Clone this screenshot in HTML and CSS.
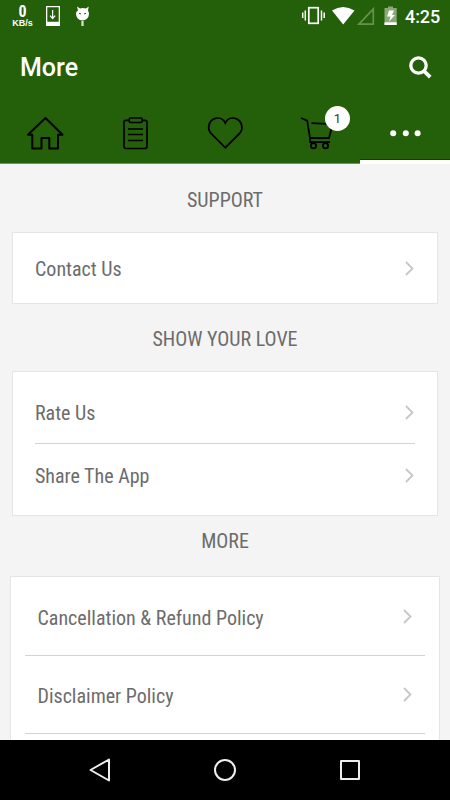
FILE: index.html
```html
<!DOCTYPE html>
<html lang="en">
<head>
<meta charset="utf-8">
<title>More</title>
<link rel="stylesheet" href="styles.css">
</head>
<body>
<div class="app">
  <header class="header">
    <div class="status">
      <div class="speed"><span class="speed-value">0</span><span class="speed-unit">KB/s</span></div>
      <svg class="status-left" width="60" height="32" viewBox="0 0 60 32">
        <path fill="#fff" fill-rule="evenodd" d="M6 6h14v20H6zM7.3 7.3v14.4h11.4V7.300z"/>
        <path d="M12.600 10v8M10 15.600l2.600 2.900 2.600-2.900" fill="none" stroke="#fff" stroke-width="1.200"/>
        <path d="M36 13.500a6.500 6.800 0 0 0 13 .5q0-2-1-3.500l.7-4-2.700 2q-3.500-1-6 0l-3-2 1 4q-2 1-2 3z" fill="#fff"/>
        <path d="M42.500 21v5" stroke="#d4e0ce" stroke-width="2.300"/>
        <path d="M39 13.300l2 .7M46 13.300l-2 .7" stroke="#245f09" stroke-width="1"/>
      </svg>
      <svg class="status-right" width="100" height="32" viewBox="0 0 100 32">
        <g fill="none" stroke="#fff" stroke-width="1.500">
          <rect x="8.800" y="7.700" width="9.400" height="15.600" stroke-width="1.700"/>
          <path d="M2.700 12.500v5.500M5.300 10.500v10M21.500 10.500v10M24.200 12.500v5.500"/>
        </g>
        <path d="M32 10.500Q43 3.500 54.500 10.500L43.200 24.500z" fill="#fff"/>
        <path d="M59 24.200L73.300 9v15.200z" fill="none" stroke="#69914e" stroke-width="1.700"/>
        <path d="M84.500 8H88V6.500h5V8h3.700v17H84.500z" fill="#8aa87a"/>
        <path d="M84.500 22.300h12.200V25H84.500z" fill="#fff"/>
        <path d="M89 10.500h5l-2 4.500h3l-6 6.500 1.500-5H87z" fill="#fff"/>
      </svg>
      <span class="clock">4:25</span>
    </div>
    <div class="titlebar">
      <h1 class="title">More</h1>
      <svg width="26" height="26" viewBox="0 0 26 26" fill="none" stroke="#fff">
        <circle cx="11.500" cy="10.500" r="7.700" stroke-width="3.300"/>
        <path d="M17 16l6.200 6.200" stroke-width="3.800"/>
      </svg>
    </div>
    <nav class="tabs">
      <div class="tab">
        <svg width="90" height="60" viewBox="0 0 90 60" fill="none" stroke="#000" stroke-width="2" stroke-linejoin="round">
          <path d="M28 31.700L45.500 15 62.500 31.700H58V45.500H49.300V35H41.500V45.500H32.300V31.700z"/>
        </svg>
      </div>
      <div class="tab">
        <svg width="90" height="60" viewBox="0 0 90 60" fill="none" stroke="#000" stroke-width="1.700">
          <path d="M39 17.300H36q-2 0-2 2V43q0 2.500 2 2.500H55q2 0 2-2.500V19.300q0-2-2-2H52"/>
          <rect x="39.200" y="15" width="13" height="4.500" rx="1.500"/>
          <path d="M38 26h15M38 31.500h15M38 37.500h15" stroke-width="1.300"/>
        </svg>
      </div>
      <div class="tab">
        <svg width="90" height="60" viewBox="0 0 90 60" fill="none" stroke="#000" stroke-width="1.800">
          <path d="M45.300 44.700L31 30.500C27 26 28.500 18 34.500 15.700C38.500 14.200 43 15.500 45.300 20C47.500 15.500 52 14.200 56 15.700C62 18 63.800 26 59.500 30.500z"/>
        </svg>
      </div>
      <div class="tab">
        <svg width="90" height="60" viewBox="0 0 90 60" fill="none" stroke="#000" stroke-width="1.800">
          <path d="M31 15l6.200 2.700L40 35H59L62.500 22M41.500 20.200l21 1M40 35v4.200H60"/>
          <circle cx="43.500" cy="42.800" r="2.600"/><circle cx="55.500" cy="42.800" r="2.600"/>
        </svg>
        <span class="badge">1</span>
      </div>
      <div class="tab active">
        <svg width="90" height="60" viewBox="0 0 90 60" fill="#fff">
          <circle cx="33.200" cy="30.300" r="3"/><circle cx="45.800" cy="30.300" r="3"/><circle cx="57.600" cy="30.300" r="3"/>
        </svg>
      </div>
    </nav>
  </header>
  <main class="content">
    <h2 class="heading first">SUPPORT</h2>
    <section class="card single">
      <div class="row"><span>Contact Us</span><svg class="chev" width="9" height="15" viewBox="0 0 9 15"><path d="M1 1l6.500 6.500L1 14"/></svg></div>
    </section>
    <h2 class="heading love">SHOW YOUR LOVE</h2>
    <section class="card pair">
      <div class="row rate"><span>Rate Us</span><svg class="chev" width="9" height="15" viewBox="0 0 9 15"><path d="M1 1l6.500 6.500L1 14"/></svg></div>
      <div class="row"><span>Share The App</span><svg class="chev" width="9" height="15" viewBox="0 0 9 15"><path d="M1 1l6.500 6.500L1 14"/></svg></div>
    </section>
    <h2 class="heading more">MORE</h2>
    <section class="card policies">
      <div class="row"><span>Cancellation &amp; Refund Policy</span><svg class="chev" width="9" height="15" viewBox="0 0 9 15"><path d="M1 1l6.500 6.500L1 14"/></svg></div>
      <div class="row"><span>Disclaimer Policy</span><svg class="chev" width="9" height="15" viewBox="0 0 9 15"><path d="M1 1l6.500 6.500L1 14"/></svg></div>
    </section>
  </main>
  <footer class="navbar">
    <svg width="26" height="26" viewBox="0 0 26 26"><path d="M3.500 13L22 2.500v21z"/></svg>
    <svg width="26" height="26" viewBox="0 0 26 26"><circle cx="13" cy="13" r="10"/></svg>
    <svg width="26" height="26" viewBox="0 0 26 26"><rect x="4" y="4" width="18" height="18"/></svg>
  </footer>
</div>
</body>
</html>
```
FILE: styles.css
```css
* { box-sizing: border-box; }
body { margin: 0; font-family: Roboto, sans-serif; }
svg { display: block; flex: none; }
.app { width: 450px; height: 800px; display: flex; flex-direction: column; overflow: hidden; background: #f4f4f4; }
.header { height: 164px; flex: none; background: #245f09; border-bottom: 1px solid #6b945a; color: #fff; }
.status { height: 32px; display: flex; }
.speed { width: 40px; padding: 4px 0 0 5px; display: flex; flex-direction: column; align-items: center; }
.speed-value { font-family: "Roboto Condensed", Roboto, sans-serif; font-size: 16px; line-height: 15px; font-weight: 700; }
.speed-unit { font: bold 9px/9px "Liberation Sans", sans-serif; }
.status-right { margin-left: 200px; }
.clock { margin-left: 5px; font-size: 18px; line-height: 33px; font-weight: 500; letter-spacing: -.1px; }
.titlebar { height: 71px; display: flex; align-items: center; justify-content: space-between; padding: 0 17px 0 20px; }
.title { margin: 0; font-size: 25px; font-weight: 500; }
.tabs { display: flex; height: 60px; }
.tab { position: relative; width: 90px; height: 60px; }
.active { box-shadow: inset 0 -4px #fff, inset 0 -5px #173f05; height: 61px; }
.badge { position: absolute; left: 55px; top: 3px; width: 25px; height: 25px; border-radius: 50%; background: #fff; color: #333; font-size: 13px; line-height: 26px; text-align: center; }
.content { height: 576px; flex: none; overflow: hidden; color: #6c6c6c; font-family: "Roboto Condensed", Roboto, sans-serif; font-stretch: 75%; font-size: 20px; }
.heading { margin: 0; font-size: 20px; font-weight: 400; text-align: center; }
.first { height: 68px; line-height: 72px; }
.love { height: 67px; line-height: 71px; }
.more { height: 60px; line-height: 51px; }
.card { margin: 0 12px; border: 1px solid #e5e5e5; background: #fff; padding: 0 22px; }
.row { display: flex; align-items: center; justify-content: space-between; }
.chev { fill: none; stroke: #c6c6c6; stroke-width: 1.800; margin: 0 1px 1px 0; }
.single { height: 72px; }
.single .row { height: 71px; }
.pair { height: 145px; }
.pair .row { height: 64px; }
.pair .rate { height: 72px; padding-top: 11px; border-bottom: 1px solid #d3d3d3; }
.rate .chev { margin-bottom: 2px; }
.policies { margin: 0 10px; height: 170px; padding: 0 14px; }
.policies .row { height: 79px; padding: 3px 12px 0 12.500px; border-bottom: 1px solid #d3d3d3; }
.policies .row + .row { height: 78px; padding-top: 2px; }
.policies .chev { margin-bottom: 3px; }
.navbar { height: 60px; flex: none; display: flex; align-items: center; justify-content: space-around; padding: 0 38px; background: #000; }
.navbar svg { fill: none; stroke: #eee; stroke-width: 2; stroke-linejoin: round; }
```
